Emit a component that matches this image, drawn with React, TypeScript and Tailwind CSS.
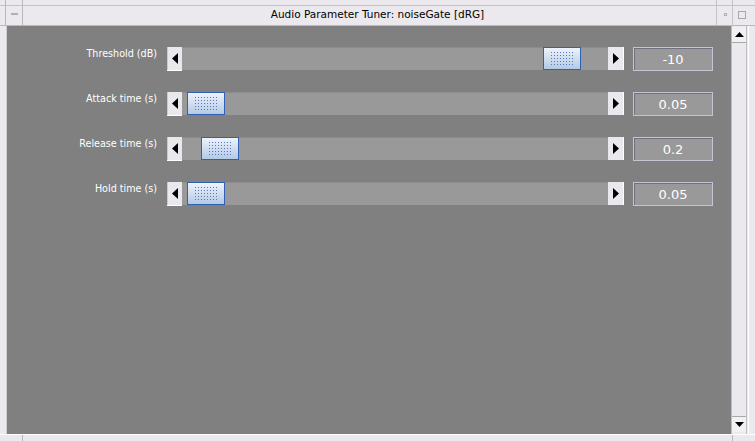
import React from 'react';

interface Param {
  label: string;
  value: string;
  thumb: number; // thumb offset inside track, px
}

const PARAMS: Param[] = [
  { label: 'Threshold (dB)', value: '-10', thumb: 361 },
  { label: 'Attack time (s)', value: '0.05', thumb: 5 },
  { label: 'Release time (s)', value: '0.2', thumb: 19 },
  { label: 'Hold time (s)', value: '0.05', thumb: 5 },
];

function ArrowLeft() {
  return (
    <svg width="6" height="11" viewBox="0 0 6 11">
      <path d="M6 0 L0 5.5 L6 11 Z" fill="#000" />
    </svg>
  );
}

function ArrowRight() {
  return (
    <svg width="6" height="11" viewBox="0 0 6 11">
      <path d="M0 0 L6 5.5 L0 11 Z" fill="#000" />
    </svg>
  );
}

function Slider({ thumb }: { thumb: number }) {
  return (
    <div className="flex h-[24px] w-[457px]">
      <div className="flex w-[15px] items-center justify-center border-b border-white bg-[#e9e8ec] shadow-[inset_1px_0_0_#c9c8cc]">
        <ArrowLeft />
      </div>
      <div className="relative flex-1 border-t border-[#8c8c8c] bg-[#999999] h-[23px]">
        <div
          className="absolute top-[-1px] flex h-[23px] w-[38px] items-center justify-center border border-[#3060b8] bg-gradient-to-b from-[#eef3fa] to-[#b4c9e4]"
          style={{ left: thumb }}
        >
          <div className="h-[15px] w-[24px] bg-[radial-gradient(circle,#5078c8_0.5px,transparent_0.8px)] bg-[length:3px_3px]" />
        </div>
      </div>
      <div className="flex w-[16px] items-center justify-center border-r border-white bg-[#e9e8ec] h-[23px]">
        <ArrowRight />
      </div>
    </div>
  );
}

export default function App() {
  return (
    <div className="flex h-[441px] w-[755px] flex-col bg-[#ebe9ed] font-['DejaVu_Sans',sans-serif] overflow-hidden">
      {/* Title bar */}
      <div className="relative flex h-[26px] items-center border-b border-[#b9b8bc]">
        <div className="absolute left-0 right-0 top-[5px] h-px bg-[#c4c3c7]" />
        <div className="absolute left-[5px] top-0 h-[25px] w-px bg-[#b9b8bc]" />
        <div className="absolute left-[22px] top-0 h-[25px] w-px bg-[#b9b8bc]" />
        <div className="absolute left-[11px] top-[13px] h-[2px] w-[7px] border border-[#b0afb3] bg-white" />
        <div className="flex-1 text-center text-[10.5px] text-black leading-none pt-[3px]">
          Audio Parameter Tuner: noiseGate [dRG]
        </div>
        <div className="absolute left-[716px] top-0 h-[25px] w-px bg-[#c4c3c7]" />
        <div className="absolute left-[724px] top-[13px] h-[3px] w-[3px] border border-[#b0afb3]" />
        <div className="absolute left-[732px] top-0 h-[25px] w-px bg-[#c4c3c7]" />
        <div className="absolute left-[738px] top-[11px] h-[8px] w-[8px] border border-[#a8a7ab]" />
      </div>

      {/* Body */}
      <div className="flex flex-1">
        <div className="w-[7px] border-r border-[#cfced2]" />
        <div className="flex flex-1 flex-col gap-[21px] bg-[#808080] pt-[21px]">
          {PARAMS.map((p) => (
            <div key={p.label} className="flex h-[24px] items-center">
              <div className="w-[150px] pb-[9px] text-right text-[9.6px] text-white">{p.label}</div>
              <div className="ml-[10px]">
                <Slider thumb={p.thumb} />
              </div>
              <div className="ml-[9px] flex h-[24px] w-[80px] items-center justify-center border border-[#c4c4d4] bg-[#999999] pt-px text-[13px] text-white shadow-[inset_1px_1px_0_#707080]">
                {p.value}
              </div>
            </div>
          ))}
        </div>
        {/* Scrollbar */}
        <div className="flex w-[15px] flex-col border-l border-[#bebdc1] bg-[#ebe9ed]">
          <div className="flex h-[16px] items-center justify-center border-b border-[#a8a7ab] bg-[#f1f0f3] mt-px">
            <svg width="9" height="5" viewBox="0 0 9 5">
              <path d="M0 5 L4.5 0 L9 5 Z" fill="#000" />
            </svg>
          </div>
          <div className="flex-1" />
          <div className="flex h-[16px] items-center justify-center border-t border-[#a8a7ab] bg-[#f1f0f3] mb-[2px]">
            <svg width="9" height="5" viewBox="0 0 9 5">
              <path d="M0 0 L4.5 5 L9 0 Z" fill="#000" />
            </svg>
          </div>
        </div>
        <div className="w-[9px] border-l border-[#bebdc1]">
          <div className="ml-[1px] h-full border-l border-white" />
        </div>
      </div>
      <div className="relative h-[7px] border-t border-white">
        <div className="absolute left-[22px] top-0 h-full w-px bg-[#b9b8bc]" />
        <div className="absolute left-[732px] top-0 h-full w-px bg-[#b9b8bc]" />
      </div>
    </div>
  );
}
